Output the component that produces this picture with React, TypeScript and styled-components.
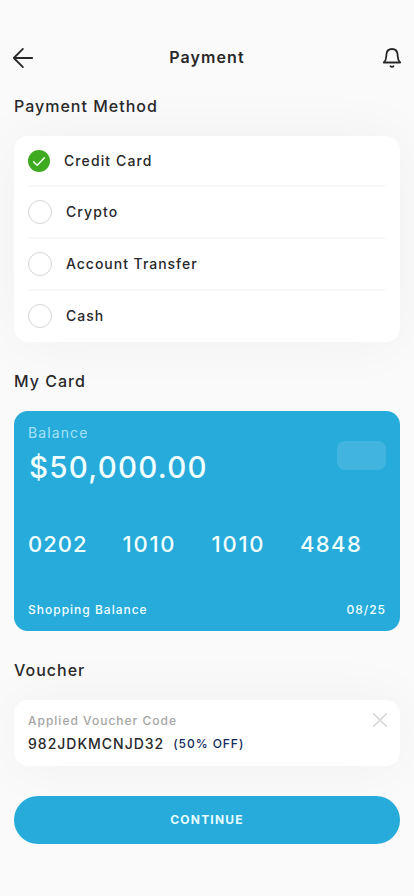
import React from 'react';
import styled, { createGlobalStyle } from 'styled-components';

const GlobalStyle = createGlobalStyle`
  * { box-sizing: border-box; }
  body {
    margin: 0;
    background: #fafafa;
    color: #28282a;
    font-family: Inter, sans-serif;
    -webkit-font-smoothing: antialiased;
  }
`;

const Screen = styled.div`
  height: 896px;
  padding: 43px 14px 0;
  overflow: hidden;
  white-space: nowrap;
`;

const Header = styled.header`
  display: grid;
  grid-template-columns: 24px 1fr 24px;
  align-items: start;
  height: 28px;
  margin: 0 -4px 0 -3px;
`;

const Title = styled.h1`
  margin: 1px 1px 0 0;
  text-align: center;
  font-size: 16px;
  line-height: 26px;
  font-weight: 600;
  letter-spacing: 1.1px;
`;

const IconButton = styled.button`
  display: flex;
  padding: 0;
  border: 0;
  background: none;
  color: inherit;
`;

const SectionTitle = styled.h2<{ $top: number }>`
  margin: ${p => p.$top}px 0 18px;
  font-size: 16px;
  line-height: 24px;
  font-weight: 500;
  letter-spacing: 1px;
`;

const Panel = styled.section`
  padding: 0 14px;
  border-radius: 14px;
  background: #fff;
  box-shadow: 0 0 60px rgba(0, 0, 0, 0.045);
`;

const Methods = styled(Panel)`
  height: 206px;
  padding-top: 1px;
`;

const Method = styled.div<{ $spacing: number }>`
  display: flex;
  align-items: center;
  gap: 14px;
  padding: 13px 0;
  font-size: 14px;
  line-height: 20px;
  font-weight: 500;
  letter-spacing: ${p => p.$spacing}px;
  & + & { border-top: 2px solid #f9f9f9; }
`;

const Radio = styled.span`
  width: 24px;
  height: 24px;
  border: 1px solid #d6d6dc;
  border-radius: 50%;
`;

const Checked = styled.span`
  display: flex;
  width: 22px;
  height: 22px;
  border-radius: 50%;
  background: #3daa20;
`;

const BankCard = styled.section`
  display: flex;
  flex-direction: column;
  height: 220px;
  padding: 13px 14px 12px;
  border-radius: 14px;
  background: #26abdb;
  color: #f2ffff;
`;

const CardTop = styled.div`
  display: flex;
  justify-content: space-between;
`;

const BalanceLabel = styled.div`
  font-size: 14px;
  line-height: 18px;
  letter-spacing: 1.1px;
  color: #a5e2f6;
`;

const Amount = styled.div`
  margin: 6px 0 0 1px;
  font-size: 29.5px;
  line-height: 38px;
  font-weight: 500;
  letter-spacing: 1.25px;
`;

const Chip = styled.div`
  width: 49px;
  height: 29px;
  margin-top: 17px;
  border-radius: 8px;
  background: #41b5df;
`;

const Digits = styled.div`
  display: grid;
  grid-template-columns: 94.500px 89px 88.500px auto;
  margin-top: 44px;
  font-size: 22px;
  line-height: 28px;
  font-weight: 500;
`;

const DigitGroup = styled.span<{ $spacing: number }>`
  letter-spacing: ${p => p.$spacing}px;
`;

const CardFoot = styled.div`
  display: flex;
  justify-content: space-between;
  margin-top: auto;
  font-size: 12px;
  line-height: 18px;
  font-weight: 500;
  letter-spacing: 1px;
`;

const Voucher = styled(Panel)`
  display: flex;
  justify-content: space-between;
  height: 66px;
  padding: 11px 12px 0 14px;
`;

const VoucherLabel = styled.div`
  font-size: 12px;
  line-height: 20px;
  letter-spacing: 1px;
  font-weight: 500;
  color: #a5a5a5;
`;

const Code = styled.div`
  display: flex;
  gap: 9px;
  margin-top: 3px;
  font-size: 14px;
  line-height: 20px;
  font-weight: 500;
  letter-spacing: 1px;
`;

const Discount = styled.span`
  font-size: 12px;
  letter-spacing: 0.95px;
  color: #132c5c;
`;

const Continue = styled.button`
  display: block;
  width: 100%;
  height: 48px;
  margin-top: 30px;
  padding: 0;
  border: 0;
  border-radius: 24px;
  background: #26abdb;
  color: #e6fdff;
  font: 700 12px/20px Inter, sans-serif;
  letter-spacing: 1.2px;
`;

const BackIcon = () => (
  <svg width="24" height="30" viewBox="0 0 24 30" fill="none" stroke="currentColor" strokeWidth="1.8" strokeLinecap="round" strokeLinejoin="round">
    <path d="M21.2 15H2.800M11.900 5.900L2.800 15l9.100 9.100" />
  </svg>
);

const BellIcon = () => (
  <svg width="24" height="30" viewBox="0 0 24 30" fill="none" stroke="currentColor" strokeWidth="1.8" strokeLinecap="round" strokeLinejoin="round">
    <path d="M3.800 19.500C5.500 18 6.200 16 6.300 13.200L6.400 11.500C6.700 7.900 8.900 6 12 6S17.300 7.900 17.600 11.500L17.700 13.200C17.800 16 18.500 18 20.200 19.500Z" />
    <path d="M10.500 23.300Q12 24.500 13.500 23.300" />
  </svg>
);

const CheckIcon = () => (
  <svg width="22" height="22" viewBox="0 0 22 22" fill="none" stroke="#f4fff2" strokeWidth="1.5" strokeLinecap="round" strokeLinejoin="round">
    <path d="M5.600 11.900l3.600 3.400 7.200-7.600" />
  </svg>
);

const CloseIcon = () => (
  <svg width="16" height="18" viewBox="0 0 16 18" fill="none" stroke="#d8d8d8" strokeWidth="1.7" strokeLinecap="round">
    <path d="M1.800 2.800l12.400 12.400M14.200 2.800L1.800 15.200" />
  </svg>
);

const methods = [
  { name: 'Credit Card', spacing: 1.1 },
  { name: 'Crypto', spacing: 1.1 },
  { name: 'Account Transfer', spacing: 0.98 },
  { name: 'Cash', spacing: 1 },
];
const digits = [
  { value: '0202', spacing: 1 },
  { value: '1010', spacing: 1.8 },
  { value: '1010', spacing: 1.8 },
  { value: '4848', spacing: 1.4 },
];

export default function App() {
  return (
    <>
      <GlobalStyle />
      <Screen>
        <Header>
          <IconButton aria-label="Back"><BackIcon /></IconButton>
          <Title>Payment</Title>
          <IconButton aria-label="Notifications"><BellIcon /></IconButton>
        </Header>
        <SectionTitle $top={23}>Payment Method</SectionTitle>
        <Methods>
          {methods.map(({ name, spacing }, i) => (
            <Method key={name} $spacing={spacing}>
              {i === 0 ? <Checked><CheckIcon /></Checked> : <Radio />}
              {name}
            </Method>
          ))}
        </Methods>
        <SectionTitle $top={27}>My Card</SectionTitle>
        <BankCard>
          <CardTop>
            <div>
              <BalanceLabel>Balance</BalanceLabel>
              <Amount>$50,000.00</Amount>
            </div>
            <Chip />
          </CardTop>
          <Digits>
            {digits.map((d, i) => <DigitGroup key={i} $spacing={d.spacing}>{d.value}</DigitGroup>)}
          </Digits>
          <CardFoot><span>Shopping Balance</span><span>08/25</span></CardFoot>
        </BankCard>
        <SectionTitle $top={27}>Voucher</SectionTitle>
        <Voucher>
          <div>
            <VoucherLabel>Applied Voucher Code</VoucherLabel>
            <Code>982JDKMCNJD32 <Discount>(50% OFF)</Discount></Code>
          </div>
          <IconButton as="span"><CloseIcon /></IconButton>
        </Voucher>
        <Continue>CONTINUE</Continue>
      </Screen>
    </>
  );
}
